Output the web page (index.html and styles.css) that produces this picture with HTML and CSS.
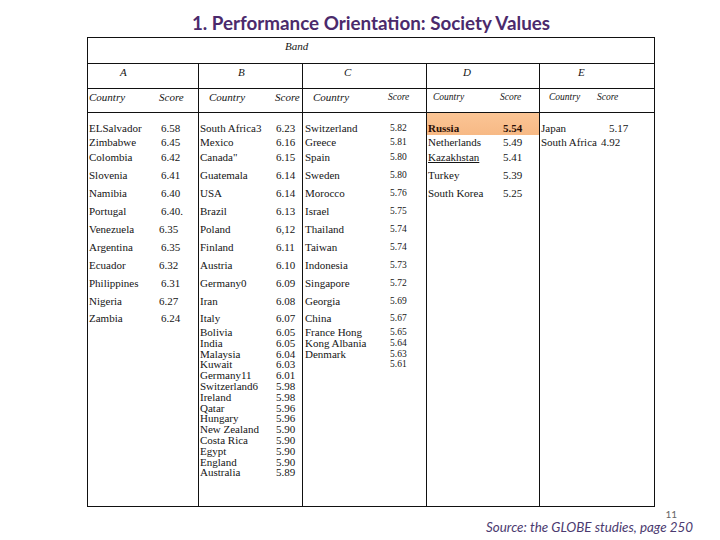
FILE: index.html
```html
<!DOCTYPE html>
<html>
<head>
<meta charset="utf-8">
<link rel="stylesheet" href="styles.css">
</head>
<body>
<div class="slide">
  <h1 class="title">1. Performance Orientation: Society Values</h1>
  <div class="tbl">
    <div class="band-row"><span>Band</span></div>
    <div class="grid letters">
      <div class="col a"><span class="lt">A</span></div>
      <div class="col b"><span class="lt">B</span></div>
      <div class="col c"><span class="lt">C</span></div>
      <div class="col d"><span class="lt">D</span></div>
      <div class="col e"><span class="lt">E</span></div>
    </div>
    <div class="grid heads">
      <div class="col a"><span class="hc">Country</span><span class="hs">Score</span></div>
      <div class="col b"><span class="hc">Country</span><span class="hs">Score</span></div>
      <div class="col c"><span class="hc">Country</span><span class="hs small">Score</span></div>
      <div class="col d"><span class="hc small">Country</span><span class="hs small">Score</span></div>
      <div class="col e"><span class="hc small">Country</span><span class="hs small">Score</span></div>
    </div>
    <div class="grid body">
      <div class="col a">
        <div class="row t1"><span class="cty">ELSalvador</span><span class="sc">6.58</span></div>
        <div class="row t1"><span class="cty">Zimbabwe</span><span class="sc">6.45</span></div>
        <div class="row t3"><span class="cty">Colombia</span><span class="sc">6.42</span></div>
        <div class="row"><span class="cty">Slovenia</span><span class="sc">6.41</span></div>
        <div class="row"><span class="cty">Namibia</span><span class="sc">6.40</span></div>
        <div class="row"><span class="cty">Portugal</span><span class="sc">6.40.</span></div>
        <div class="row"><span class="cty">Venezuela</span><span class="sc lft">6.35</span></div>
        <div class="row"><span class="cty">Argentina</span><span class="sc">6.35</span></div>
        <div class="row"><span class="cty">Ecuador</span><span class="sc lft">6.32</span></div>
        <div class="row"><span class="cty">Philippines</span><span class="sc">6.31</span></div>
        <div class="row"><span class="cty">Nigeria</span><span class="sc lft">6.27</span></div>
        <div class="row t3"><span class="cty">Zambia</span><span class="sc">6.24</span></div>
      </div>
      <div class="col b">
        <div class="row t1"><span class="cty">South Africa3</span><span class="sc">6.23</span></div>
        <div class="row t1"><span class="cty">Mexico</span><span class="sc">6.16</span></div>
        <div class="row t3"><span class="cty">Canada"</span><span class="sc">6.15</span></div>
        <div class="row"><span class="cty">Guatemala</span><span class="sc">6.14</span></div>
        <div class="row"><span class="cty">USA</span><span class="sc">6.14</span></div>
        <div class="row"><span class="cty">Brazil</span><span class="sc">6.13</span></div>
        <div class="row"><span class="cty">Poland</span><span class="sc">6,12</span></div>
        <div class="row"><span class="cty">Finland</span><span class="sc">6.11</span></div>
        <div class="row"><span class="cty">Austria</span><span class="sc">6.10</span></div>
        <div class="row"><span class="cty">Germany0</span><span class="sc">6.09</span></div>
        <div class="row"><span class="cty">Iran</span><span class="sc">6.08</span></div>
        <div class="row t3"><span class="cty">Italy</span><span class="sc">6.07</span></div>
        <div class="row cp"><span class="cty">Bolivia</span><span class="sc">6.05</span></div>
        <div class="row cp"><span class="cty">India</span><span class="sc">6.05</span></div>
        <div class="row cp"><span class="cty">Malaysia</span><span class="sc">6.04</span></div>
        <div class="row cp"><span class="cty">Kuwait</span><span class="sc">6.03</span></div>
        <div class="row cp"><span class="cty">Germany11</span><span class="sc">6.01</span></div>
        <div class="row cp"><span class="cty">Switzerland6</span><span class="sc">5.98</span></div>
        <div class="row cp"><span class="cty">Ireland</span><span class="sc">5.98</span></div>
        <div class="row cp"><span class="cty">Qatar</span><span class="sc">5.96</span></div>
        <div class="row cp"><span class="cty">Hungary</span><span class="sc">5.96</span></div>
        <div class="row cp"><span class="cty">New Zealand</span><span class="sc">5.90</span></div>
        <div class="row cp"><span class="cty">Costa Rica</span><span class="sc">5.90</span></div>
        <div class="row cp"><span class="cty">Egypt</span><span class="sc">5.90</span></div>
        <div class="row cp"><span class="cty">England</span><span class="sc">5.90</span></div>
        <div class="row cp"><span class="cty">Australia</span><span class="sc">5.89</span></div>
      </div>
      <div class="col c">
        <div class="row t1"><span class="cty">Switzerland</span><span class="sc">5.82</span></div>
        <div class="row t1"><span class="cty">Greece</span><span class="sc">5.81</span></div>
        <div class="row t3"><span class="cty">Spain</span><span class="sc">5.80</span></div>
        <div class="row"><span class="cty">Sweden</span><span class="sc">5.80</span></div>
        <div class="row"><span class="cty">Morocco</span><span class="sc">5.76</span></div>
        <div class="row"><span class="cty">Israel</span><span class="sc">5.75</span></div>
        <div class="row"><span class="cty">Thailand</span><span class="sc">5.74</span></div>
        <div class="row"><span class="cty">Taiwan</span><span class="sc">5.74</span></div>
        <div class="row"><span class="cty">Indonesia</span><span class="sc">5.73</span></div>
        <div class="row"><span class="cty">Singapore</span><span class="sc">5.72</span></div>
        <div class="row"><span class="cty">Georgia</span><span class="sc">5.69</span></div>
        <div class="row t3"><span class="cty">China</span><span class="sc">5.67</span></div>
        <div class="row cp"><span class="cty">France Hong</span><span class="sc">5.65</span></div>
        <div class="row cp"><span class="cty">Kong Albania</span><span class="sc">5.64</span></div>
        <div class="row cp"><span class="cty">Denmark</span><span class="sc">5.63</span></div>
        <div class="row cp"><span class="cty"></span><span class="sc">5.61</span></div>
      </div>
      <div class="col d">
        <div class="row t1 hl"><span class="cty">Russia</span><span class="sc">5.54</span></div>
        <div class="row t1"><span class="cty">Netherlands</span><span class="sc">5.49</span></div>
        <div class="row t3"><span class="cty ul">Kazakhstan</span><span class="sc">5.41</span></div>
        <div class="row"><span class="cty">Turkey</span><span class="sc">5.39</span></div>
        <div class="row"><span class="cty">South Korea</span><span class="sc">5.25</span></div>
      </div>
      <div class="col e">
        <div class="row t1"><span class="cty">Japan</span><span class="sc">5.17</span></div>
        <div class="row t1"><span class="cty short">South Africa</span><span class="sc">4.92</span></div>
      </div>
    </div>
  </div>
  <div class="foot">
    <span class="pnum">11</span>
    <span class="source">Source: the GLOBE studies, page 250</span>
  </div>
</div>
</body>
</html>
```
FILE: styles.css
```css
* { box-sizing: border-box; }
html, body { margin: 0; padding: 0; background: #fff; }
body { width: 720px; height: 540px; overflow: hidden; }

.slide { position: relative; width: 720px; height: 540px; padding-top: 10px; }

.title {
  margin: 0 0 0 87px;
  width: 568px;
  height: 27px;
  text-align: center;
  font-family: Lato, "Open Sans", sans-serif;
  font-weight: 700;
  font-size: 18.8px;
  line-height: 26px;
  letter-spacing: 0;
  color: #4b2a6c;
}

.tbl {
  margin-left: 87px;
  width: 568px;
  border: 1px solid #111;
  font-family: "Liberation Serif", "Times New Roman", serif;
  font-size: 11px;
  color: #151515;
}

.band-row {
  height: 26px;
  border-bottom: 1px solid #111;
  padding: 1px 0 0 197px;
  font-style: italic;
  font-size: 11px;
  line-height: 14px;
}

.grid {
  display: grid;
  grid-template-columns: 110px 104px 124px 113px 115px;
}

.col + .col { border-left: 1px solid #111; }

.a { --cp: 1px; --cw: 73px; --hp: 1px; --hw: 71px; --lx: 32px; }
.b { --cp: 1px; --cw: 77px; --hp: 10px; --hw: 76px; --lx: 39px; }
.c { --cp: 2px; --cw: 87px; --hp: 10px; --hw: 85px; --lx: 41px; }
.d { --cp: 1px; --cw: 76px; --hp: 6px; --hw: 73px; --lx: 36px; }
.e { --cp: 1px; --cw: 69px; --hp: 9px; --hw: 57px; --lx: 38px; }

.letters { height: 25px; border-bottom: 1px solid #111; }
.letters .col { padding: 1px 0 0 var(--lx); font-style: italic; line-height: 14px; }

.heads { height: 24px; border-bottom: 1px solid #111; }
.heads .col { display: flex; align-items: flex-start; padding-top: 1px; font-style: italic; line-height: 14px; }
.hc { flex: 0 0 var(--hw); padding-left: var(--hp); }
.small { font-size: 9.5px; }

.body { height: 393px; }
.body .col { padding-top: 8px; }

.row { display: flex; height: 18px; line-height: 18px; white-space: nowrap; }
.row.t1 { height: 14px; line-height: 14px; }
.row.t3 { height: 17px; line-height: 17px; }
.row.cp { height: 10.8px; line-height: 10.8px; }
.cty { flex: 0 0 var(--cw); padding-left: var(--cp); }
.cty.short { flex-basis: 61px; }
.sc.lft { margin-left: -2px; }
.c .sc { font-size: 9.5px; }
.ul { text-decoration: underline; }

.row.hl {
  margin-top: -8px;
  height: 22px;
  padding-top: 8px;
  background: linear-gradient(#fbc595, #f7b985);
  font-weight: 700;
  color: #2a0e05;
}

.foot {
  margin: 2px 0 0 0;
  width: 693px;
  display: flex;
  flex-direction: column;
  align-items: flex-end;
}
.pnum {
  font-family: Lato, "Open Sans", sans-serif;
  font-size: 10px;
  line-height: 10px;
  color: #666;
  margin-right: 16px;
}
.source {
  font-family: Lato, "Open Sans", sans-serif;
  font-style: italic;
  font-size: 13.4px;
  line-height: 16px;
  color: #4b3a70;
}
```
